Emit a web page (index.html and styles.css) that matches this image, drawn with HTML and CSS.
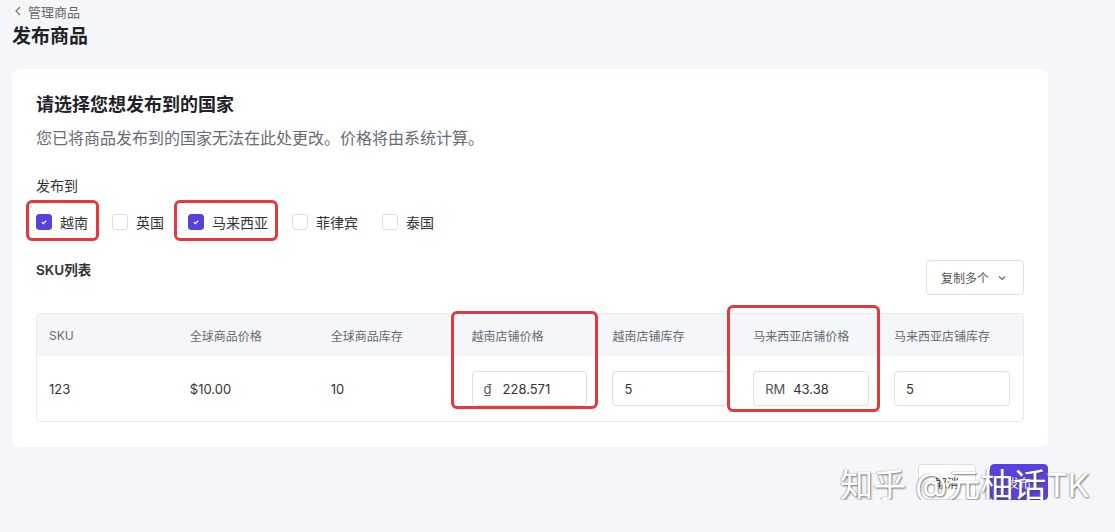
FILE: index.html
```html
<!doctype html>
<html lang="zh-CN">
<head>
    <meta charset="utf-8">
    <meta name="viewport" content="width=device-width, initial-scale=1">
    <title>发布商品</title>
    <link rel="stylesheet" href="styles.css">
</head>
<body>
    <div class="page">
        <a class="back" href="#">
            <svg width="8" height="10" viewBox="0 0 8 10"><path d="M6 1 L2 5 L6 9" fill="none" stroke="#777" stroke-width="1.2"/></svg>
            管理商品
        </a>
        <h1 class="page-title">发布商品</h1>

        <section class="card">
            <h2>请选择您想发布到的国家</h2>
            <p class="hint">您已将商品发布到的国家无法在此处更改。价格将由系统计算。</p>

            <div class="field-label">发布到</div>
            <div class="countries">
                <label class="country marked"><span class="box checked"><svg width="10" height="10" viewBox="0 0 10 10"><path d="M2.8 5.2 L4.4 6.7 L7.3 3.6" fill="none" stroke="#fff" stroke-width="1.3"/></svg></span>越南</label>
                <label class="country"><span class="box"></span>英国</label>
                <label class="country marked wide"><span class="box checked"><svg width="10" height="10" viewBox="0 0 10 10"><path d="M2.8 5.2 L4.4 6.7 L7.3 3.6" fill="none" stroke="#fff" stroke-width="1.3"/></svg></span>马来西亚</label>
                <label class="country"><span class="box"></span>菲律宾</label>
                <label class="country"><span class="box"></span>泰国</label>
            </div>

            <div class="sku-head">
                <span class="sku-title">SKU列表</span>
                <button class="copy-btn">复制多个
                    <svg width="8" height="6" viewBox="0 0 8 6"><path d="M1 1.5 L4 4.5 L7 1.5" fill="none" stroke="#666" stroke-width="1.1"/></svg>
                </button>
            </div>

            <div class="table-wrap">
                <table class="sku-table">
                    <thead>
                        <tr>
                            <th>SKU</th>
                            <th>全球商品价格</th>
                            <th>全球商品库存</th>
                            <th>越南店铺价格</th>
                            <th>越南店铺库存</th>
                            <th>马来西亚店铺价格</th>
                            <th>马来西亚店铺库存</th>
                        </tr>
                    </thead>
                    <tbody>
                        <tr>
                            <td>123</td>
                            <td>$10.00</td>
                            <td>10</td>
                            <td><div class="input"><span class="prefix">₫</span>228.571</div></td>
                            <td><div class="input">5</div></td>
                            <td><div class="input"><span class="prefix rm">RM</span>43.38</div></td>
                            <td><div class="input">5</div></td>
                        </tr>
                    </tbody>
                </table>
                <div class="mark mark-vn"></div>
                <div class="mark mark-my"></div>
            </div>
        </section>

        <div class="actions">
            <button class="btn">取消</button>
            <button class="btn primary">发布</button>
        </div>

        <div class="watermark">知乎 @元柚话TK</div>
    </div>
</body>
</html>
```

FILE: styles.css
```css
body {
    margin: 0;
    background-color: #f5f6fa;
    font-family: Inter, "Noto Sans CJK SC", sans-serif;
    color: #1f2329;
}
.page {
    position: relative;
    width: 1036px;
    padding: 3px 0 0 12px;
}
.back {
    display: flex;
    align-items: center;
    gap: 6px;
    height: 16px;
    padding-left: 2px;
    font-size: 13px;
    color: #666;
    text-decoration: none;
}
.page-title {
    margin: 5px 0 0;
    font-size: 19px;
    line-height: 26px;
    font-weight: 700;
    color: #1f2329;
}
.card {
    margin-top: 19px;
    padding: 23px 24px 25px;
    background-color: #fff;
    border-radius: 8px;
}
.card h2 {
    margin: 0;
    font-size: 18px;
    line-height: 26px;
    font-weight: 700;
}
.hint {
    margin: 8px 0 0;
    font-size: 16px;
    line-height: 24px;
    color: #686b73;
}
.field-label {
    margin-top: 26px;
    font-size: 14px;
    line-height: 20px;
    color: #333;
}
.countries {
    display: flex;
    gap: 24px;
    margin-top: 16px;
    height: 20px;
    align-items: center;
}
.country {
    position: relative;
    display: flex;
    align-items: center;
    gap: 8px;
    font-size: 14px;
    color: #333;
}
.box {
    display: flex;
    align-items: center;
    justify-content: center;
    width: 16px;
    height: 16px;
    box-sizing: border-box;
    border: 1px solid #dcdfe6;
    border-radius: 3px;
    background-color: #fff;
}
.box.checked {
    border-color: #5b40e0;
    background-color: #5b40e0;
}
.marked::after {
    content: "";
    position: absolute;
    top: -12px;
    bottom: -9px;
    left: -10px;
    right: -11px;
    border: 3px solid #e5383b;
    border-radius: 6px;
}
.marked.wide::after {
    left: -14px;
    right: -10px;
}
.sku-head {
    display: flex;
    justify-content: space-between;
    align-items: flex-start;
    margin-top: 28px;
}
.sku-title {
    font-size: 13.5px;
    line-height: 20px;
    font-weight: 600;
    color: #333;
}
.copy-btn {
    display: flex;
    align-items: center;
    gap: 9px;
    height: 35px;
    width: 98px;
    padding: 0 14px;
    border: 1px solid #dfe1e6;
    border-radius: 4px;
    background-color: #fff;
    font-family: inherit;
    font-size: 12px;
    color: #555;
}
.table-wrap {
    position: relative;
    margin-top: 18px;
}
.sku-table {
    width: 100%;
    table-layout: fixed;
    border-collapse: separate;
    border-spacing: 0;
    border: 1px solid #e8e9ee;
    border-radius: 4px;
}
.sku-table th {
    height: 42px;
    padding: 0 12px;
    text-align: left;
    font-size: 12px;
    font-weight: 400;
    color: #666a75;
    background-color: #f5f6fa;
}
.sku-table th:first-child {
    border-top-left-radius: 4px;
}
.sku-table th:last-child {
    border-top-right-radius: 4px;
}
.sku-table td {
    height: 65px;
    padding: 0 13px 0 12px;
    font-size: 13px;
    color: #333;
}
.input {
    display: flex;
    align-items: center;
    height: 35px;
    box-sizing: border-box;
    padding: 0 11px;
    border: 1px solid #dcdfe6;
    border-radius: 4px;
    font-size: 13px;
    color: #333;
}
.prefix {
    width: 19px;
    color: #555;
}
.prefix.rm {
    width: 28px;
}
.mark {
    position: absolute;
    border: 3px solid #e5383b;
    border-radius: 6px;
}
.mark-vn {
    left: 415px;
    top: -2px;
    width: 141px;
    height: 92px;
}
.mark-my {
    left: 691px;
    top: -8px;
    width: 147px;
    height: 101px;
}
.actions {
    display: flex;
    justify-content: flex-end;
    gap: 14px;
    margin-top: 17px;
}
.btn {
    width: 58px;
    height: 36px;
    border: 1px solid #dcdfe6;
    border-radius: 4px;
    background-color: #fff;
    font-family: inherit;
    font-size: 12px;
    color: #333;
}
.btn.primary {
    border-color: #5b40e0;
    background-color: #5b40e0;
    color: #fff;
}
.watermark {
    position: absolute;
    left: 840px;
    top: 464px;
    font-size: 33px;
    line-height: 42px;
    color: #fff;
    text-shadow: 1px 1px 2px rgba(60, 60, 60, 0.7), -1px 0 1px rgba(120, 120, 120, 0.5);
    white-space: nowrap;
}
```
